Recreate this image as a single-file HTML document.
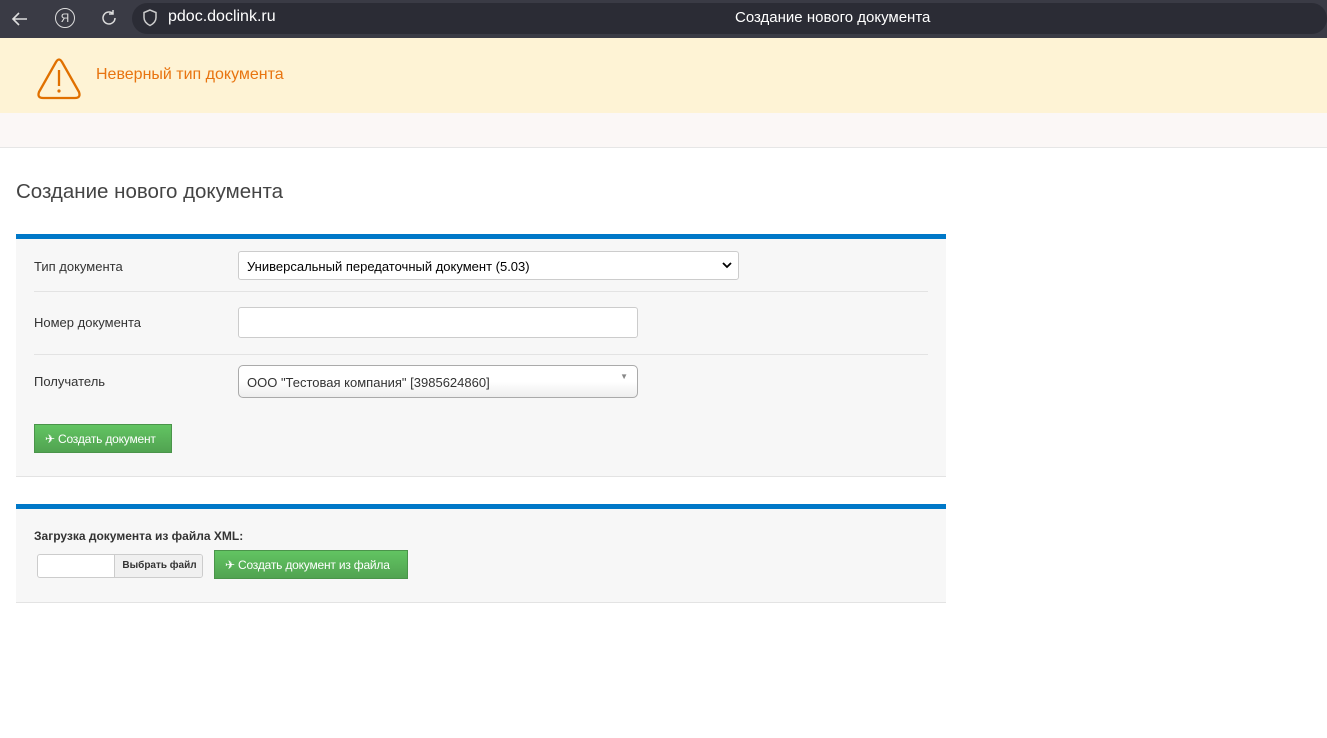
<!DOCTYPE html>
<html><head><meta charset="utf-8"><style>
*{box-sizing:border-box}
body{margin:0;width:1327px;height:738px;background:#fff;font-family:"Liberation Sans",sans-serif;position:relative;overflow:hidden}
.abs{position:absolute;white-space:nowrap}
.bar{left:0;top:0;width:1327px;height:38px;background:#3a3b45}
.url{left:132px;top:3px;width:1195px;height:31px;background:#2b2c35;border-radius:16px}
.warn{left:0;top:38px;width:1327px;height:75px;background:#fef3d5}
.strip{left:0;top:113px;width:1327px;height:35px;background:#fbf7f6;border-bottom:1px solid #e6e6e6}
.panel{left:16px;width:930px;background:#f7f7f7;border-top:5px solid #0078c8;border-bottom:1px solid #e3e3e3}
.lbl{font-size:13px;color:#333}
.inp{background:#fff;border:1px solid #ccc;border-radius:3px}
.btn{background:linear-gradient(#62c462,#51a351);border:1px solid #4a944a;color:#fff;font-size:12px;line-height:28px;padding-left:10px;letter-spacing:-0.2px}
.hr{left:34px;width:894px;height:1px;background:#e3e3e3}
</style></head><body>
<div class="abs bar"></div>
<div class="abs url"></div>
<svg class="abs" style="left:10px;top:9px" width="20" height="20" viewBox="0 0 20 20"><path d="M17 10H3M9 4L3 10l6 6" stroke="#ddd" stroke-width="1.6" fill="none"/></svg>
<div class="abs" style="left:55px;top:8px;width:20px;height:20px;border:1.5px solid #ddd;border-radius:50%;color:#ddd;font-size:12px;text-align:center;line-height:18px">Я</div>
<svg class="abs" style="left:99px;top:8px" width="20" height="20" viewBox="0 0 20 20"><path d="M16 10a6 6 0 1 1-2-4.5M14 2v4h-4" stroke="#ddd" stroke-width="1.5" fill="none"/></svg>
<svg class="abs" style="left:142px;top:9px" width="16" height="18" viewBox="0 0 16 18"><path d="M8 1L2 3.5v5c0 4 3 6.5 6 8 3-1.5 6-4 6-8v-5z" stroke="#ccc" stroke-width="1.5" fill="none"/></svg>
<div class="abs" style="left:168px;top:8px;color:#fff;font-size:16px">pdoc.doclink.ru</div>
<div class="abs" style="left:735px;top:9px;color:#fff;font-size:15px">Создание нового документа</div>
<div class="abs warn"></div>
<svg class="abs" style="left:35px;top:56px" width="48" height="44" viewBox="0 0 48 44"><path d="M21 6Q24 1 27 6L44 36Q46 42 40 42H8Q2 42 4 36Z" stroke="#e07000" stroke-width="2.3" fill="none" stroke-linejoin="round"/><path d="M24 14v16" stroke="#e07000" stroke-width="2.3"/><circle cx="24" cy="35" r="1.6" fill="#e07000"/></svg>
<div class="abs" style="left:96px;top:66px;color:#e87410;font-size:16px">Неверный тип документа</div>
<div class="abs strip"></div>
<div class="abs" style="left:16px;top:180px;font-size:20.5px;color:#444">Создание нового документа</div>
<div class="abs panel" style="top:234px;height:243px"></div>
<div class="abs lbl" style="left:34px;top:259px">Тип документа</div>
<div class="abs inp" style="left:238px;top:251px;width:501px;height:29px;font-size:13px;padding:7px 8px;color:#000">Универсальный передаточный документ (5.03)<svg style="position:absolute;right:6px;top:10px" width="10" height="7" viewBox="0 0 10 7"><path d="M1 1l4 4 4-4" stroke="#000" stroke-width="1.8" fill="none"/></svg></div>
<div class="abs hr" style="top:291px"></div>
<div class="abs lbl" style="left:34px;top:315px">Номер документа</div>
<div class="abs inp" style="left:238px;top:307px;width:400px;height:31px"></div>
<div class="abs hr" style="top:354px"></div>
<div class="abs lbl" style="left:34px;top:374px">Получатель</div>
<div class="abs" style="left:238px;top:365px;width:400px;height:33px;border:1px solid #aaa;border-radius:5px;background:linear-gradient(#fff 50%,#eee);font-size:13px;padding:9px 8px;color:#333">ООО "Тестовая компания" [3985624860]<span style="position:absolute;right:9px;top:6px;font-size:8px;color:#888">▼</span></div>
<div class="abs btn" style="left:34px;top:424px;width:138px;height:29px">✈ Создать документ</div>
<div class="abs panel" style="top:504px;height:99px"></div>
<div class="abs" style="left:34px;top:529px;font-size:12px;font-weight:bold;color:#333">Загрузка документа из файла XML:</div>
<div class="abs inp" style="left:37px;top:554px;width:166px;height:24px;overflow:hidden"><div style="position:absolute;left:76px;top:0;width:90px;height:24px;background:#f0f0f0;border-left:1px solid #ccc;font-size:10px;font-weight:bold;color:#333;text-align:center;line-height:22px">Выбрать файл</div></div>
<div class="abs btn" style="left:214px;top:550px;width:194px;height:29px">✈ Создать документ из файла</div>
</body></html>
